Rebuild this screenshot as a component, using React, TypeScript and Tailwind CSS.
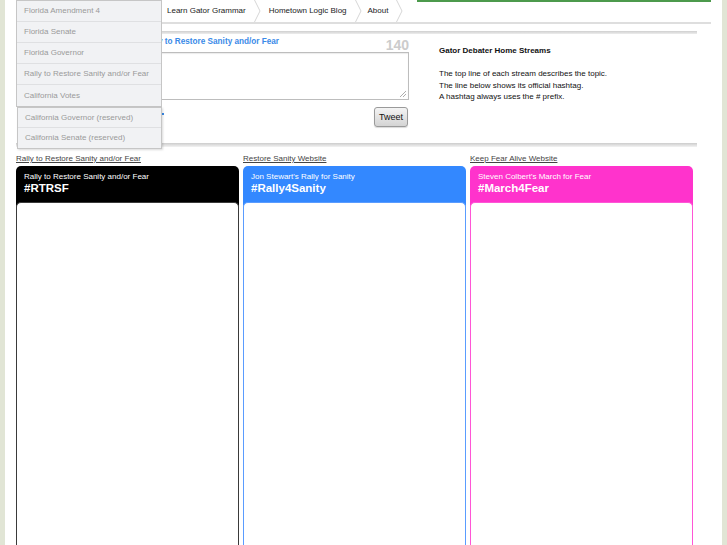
import React from "react";

const font = { fontFamily: '"Liberation Sans", Arial, sans-serif' };

function Chevron() {
  return (
    <svg width="7" height="22" viewBox="0 0 7 22" className="ml-[8px] shrink-0">
      <polyline points="0.5,0 6,11 0.5,22" fill="none" stroke="#d6d6d6" strokeWidth="1" />
    </svg>
  );
}

const group1 = ["Florida Amendment 4", "Florida Senate", "Florida Governor", "Rally to Restore Sanity and/or Fear", "California Votes"];
const group2 = ["California Governor (reserved)", "California Senate (reserved)"];

const columns = [
  { link: "Rally to Restore Sanity and/or Fear", sub: "Rally to Restore Sanity and/or Fear", tag: "#RTRSF", bg: "bg-black", border: "border-[#3a3a3a]" },
  { link: "Restore Sanity Website", sub: "Jon Stewart's Rally for Sanity", tag: "#Rally4Sanity", bg: "bg-[#3388ff]", border: "border-[#5a9cff]" },
  { link: "Keep Fear Alive Website", sub: "Steven Colbert's March for Fear", tag: "#March4Fear", bg: "bg-[#ff33cc]", border: "border-[#ff55d6]" },
];

export default function App() {
  return (
    <div className="flex h-[545px] w-[727px] overflow-hidden bg-white text-[#222]" style={font}>
      <div className="w-[5px] shrink-0 bg-[#e1e5d5]" />
      <div className="relative flex-1 pl-[11px]">
        {/* nav */}
        <div className="mr-[11px] flex h-[24px] items-start border-b-2 border-[#dedede]">
          <div className="w-[143px] shrink-0" />
          <div className="flex h-[22px] items-center">
            <span className="pl-[8px] text-[8px] leading-[10px] text-[#222]">Learn Gator Grammar</span>
            <Chevron />
            <span className="pl-[8px] text-[8px] leading-[10px] text-[#222]">Hometown Logic Blog</span>
            <Chevron />
            <span className="pl-[6px] text-[8px] leading-[10px] text-[#222]">About</span>
            <Chevron />
          </div>
          <div className="ml-auto h-[2px] w-[294px] bg-[#4c9a4c]" />
        </div>

        <div className="w-[681px]">
          <div className="mt-[7px] h-[3px] bg-gradient-to-b from-[#cfcfcf] to-[#ededed]" />

          {/* tweet section */}
          <div className="flex">
            <div className="w-[393px] shrink-0">
              <div className="flex h-[18px] justify-between">
                <span className="pl-[127px] pt-[3px] text-[8.2px] font-bold leading-[10px] text-[#3a8ae8]">
                  Rally to Restore Sanity and/or Fear
                </span>
                <span className="self-end text-[14px] font-bold leading-[13px] text-[#cccccc]">140</span>
              </div>
              <div className="relative h-[48px] w-full border border-[#bdbdbd] bg-white shadow-[inset_0_1px_1px_rgba(0,0,0,0.08)]">
                <svg width="7" height="7" viewBox="0 0 7 7" className="absolute bottom-[2px] right-[2px]">
                  <line x1="1" y1="7" x2="7" y2="1" stroke="#999" strokeWidth="0.8" />
                  <line x1="4" y1="7" x2="7" y2="4" stroke="#999" strokeWidth="0.8" />
                </svg>
              </div>
              <div className="mt-[7px] flex h-[20px] items-start justify-between">
                <div className="ml-[146px] mt-[6px] h-[1.5px] w-[1.5px] bg-[#3a8ae8]" />
                <button className="mr-[1px] h-[20px] w-[34px] rounded-[3px] border border-[#9a9a9a] bg-gradient-to-b from-[#f4f4f4] to-[#d4d4d4] text-[9px] leading-[10px] text-[#111] shadow-[0_1px_1px_rgba(0,0,0,0.15)]">
                  Tweet
                </button>
              </div>
            </div>
            <div className="ml-[30px] pt-[11px] text-[8px] leading-[11.5px] text-[#111]">
              <div className="font-bold">Gator Debater Home Streams</div>
              <div className="h-[11.5px]" />
              <div>The top line of each stream describes the topic.</div>
              <div>The line below shows its official hashtag.</div>
              <div>A hashtag always uses the # prefix.</div>
            </div>
          </div>

          <div className="mt-[16px] h-[4px] bg-gradient-to-b from-[#cccccc] to-[#f3f3f3]" />

          {/* columns */}
          <div className="mt-[7px] flex w-[677px] gap-[4px]">
            {columns.map((c) => (
              <div key={c.tag} className="flex w-[223px] flex-col">
                <a className="text-[8px] leading-[10px] text-[#444] underline">{c.link}</a>
                <div className={`mt-[2px] flex h-[400px] flex-col rounded-t-[5px] ${c.bg}`}>
                  <div className="h-[36px] px-[8px] pt-[6px] text-white">
                    <div className="text-[8px] leading-[10px]">{c.sub}</div>
                    <div className="text-[11.5px] font-bold leading-[13px]">{c.tag}</div>
                  </div>
                  <div className={`flex-1 rounded-t-[5px] border-x border-t ${c.border} bg-white`} />
                </div>
              </div>
            ))}
          </div>
        </div>

        {/* dropdown overlay */}
        <div className="absolute left-[11px] top-0 w-[146px]">
          <div className="border border-[#c6c6c6] bg-[#f1f2f4]">
            {group1.map((g, i) => (
              <div
                key={g}
                className={`flex h-[21px] items-center pl-[7px] text-[8px] text-[#9a9a9a] ${i < group1.length - 1 ? "border-b border-[#dfe0e2]" : ""}`}
              >
                {g}
              </div>
            ))}
          </div>
          <div className="ml-[1px] border border-[#c6c6c6] bg-[#f1f2f4] shadow-[1px_1px_2px_rgba(0,0,0,0.15)]">
            {group2.map((g, i) => (
              <div
                key={g}
                className={`flex h-[20px] items-center pl-[7px] text-[8px] text-[#9a9a9a] ${i < group2.length - 1 ? "border-b border-[#dfe0e2]" : ""}`}
              >
                {g}
              </div>
            ))}
          </div>
        </div>
      </div>
      <div className="w-[5px] shrink-0 bg-[#e1e5d5]" />
    </div>
  );
}
